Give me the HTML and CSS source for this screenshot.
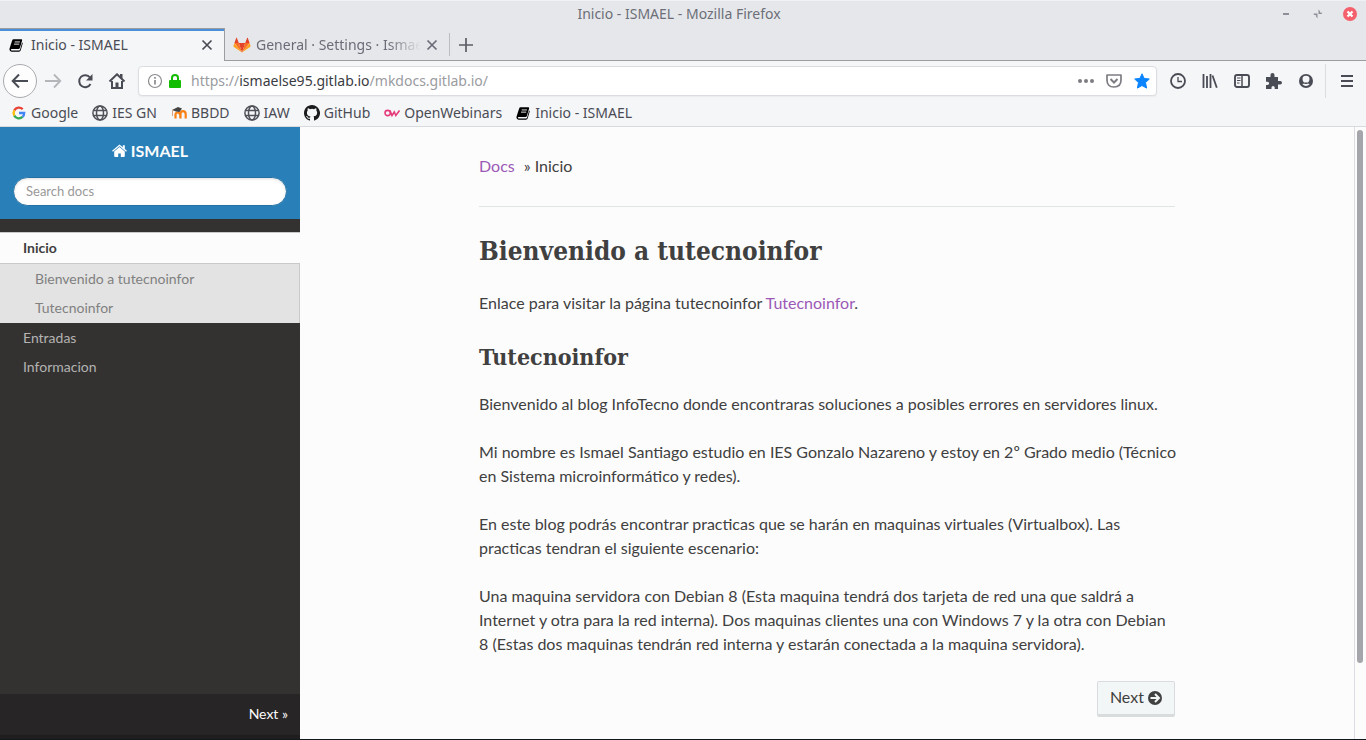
FILE: index.html
```html
<!DOCTYPE html>
<html lang="es">
<head>
<meta charset="utf-8">
<title>Inicio - ISMAEL</title>
<link rel="stylesheet" href="styles.css">
</head>
<body>
<svg class="defs" width="0" height="0" aria-hidden="true">
  <symbol id="book" viewBox="0 0 16 16"><path fill="#000" d="M5.200 1.500h9q1 .2.800 1.300l-2.600 8.700q-.4 1.200-1.600 1.200H3q-.9.100-.9.800.1.600.9.700h8.500q.8 0 1.100-.8L15 5.200q.9.500.6 1.500L13.400 14q-.5 1.600-2 1.600H3Q.6 15.400.5 13q0-.8.300-1.600L3.500 3Q4 1.600 5.200 1.500z"/><path stroke="#fff" stroke-width="1" d="M6.500 4.500h6M5.700 7h6"/></symbol>
  <symbol id="globe" viewBox="0 0 16 16"><g fill="none" stroke="#4f5158" stroke-width="1.500"><circle cx="8" cy="8" r="7.100"/><ellipse cx="8" cy="8" rx="3.500" ry="7"/><path d="M1.500 5.400h13M1.500 10.600h13"/></g></symbol>
  <symbol id="cross" viewBox="0 0 12 12"><path d="M1.500 1.500l9 9M10.500 1.500l-9 9" stroke="currentColor" stroke-width="1.700" fill="none"/></symbol>
</svg>

<header class="browser">
  <div class="titlebar">
    <span class="window-title">Inicio - ISMAEL - Mozilla Firefox</span>
    <div class="window-buttons">
      <button aria-label="Minimizar"><svg width="16" height="16" viewBox="0 0 16 16"><path d="M5 8h6" stroke="#8d8f98" stroke-width="2"/></svg></button>
      <button aria-label="Restaurar"><svg width="16" height="16" viewBox="0 0 16 16"><path fill="#8d8f98" d="M8.500 3.500l1.400 1.400v1.600l2.400.3L11.500 8h-3zM3.800 7.500h3.700v4.700L6.100 10.700V9.300l-2.400-.5z"/></svg></button>
      <button aria-label="Cerrar"><svg width="16" height="16" viewBox="0 0 16 16"><circle cx="8" cy="8" r="7" fill="#f4606c"/><path d="M5.500 5.500l5 5M10.500 5.500l-5 5" stroke="#fff" stroke-width="2.200"/></svg></button>
    </div>
  </div>

  <div class="tabs" role="tablist">
    <div class="tab active" role="tab" aria-selected="true">
      <svg width="14" height="14"><use href="#book"/></svg>
      <span class="tab-label">Inicio - ISMAEL</span>
      <button aria-label="Cerrar pestaña"><svg width="12" height="12"><use href="#cross"/></svg></button>
    </div>
    <div class="tab other" role="tab" aria-selected="false">
      <svg width="18" height="16" viewBox="0 0 18 16"><path fill="#e24329" d="M9 15.500L5.800 6h6.400z"/><path fill="#fc6d26" d="M9 15.500L5.800 6H1.400zM9 15.500L12.200 6h4.400z"/><path fill="#fca326" d="M1.400 6L.5 8.700q-.2.700.4 1.200L9 15.500zM16.600 6l.9 2.700q.2.700-.4 1.200L9 15.500z"/><path fill="#e24329" d="M1.400 6L3.300.8h.5L5.800 6zM16.600 6L14.700.8h-.5L12.200 6z"/></svg>
      <span class="tab-label fade">General · Settings · Ismae</span>
      <button aria-label="Cerrar pestaña"><svg width="12" height="12"><use href="#cross"/></svg></button>
    </div>
    <button class="new-tab" aria-label="Nueva pestaña"><svg width="14" height="14" viewBox="0 0 14 14"><path d="M7 0v14M0 7h14" stroke="#5b5d66" stroke-width="1.700"/></svg></button>
  </div>

  <div class="navbar">
    <button class="back" aria-label="Atrás"><svg width="18" height="16" viewBox="0 0 18 16"><path d="M17 8H2M8 1.500L1.700 8 8 14.500" fill="none" stroke="#4a4c55" stroke-width="2"/></svg></button>
    <button class="nav" aria-label="Adelante"><svg width="18" height="16" viewBox="0 0 18 16"><path d="M1 8h15M10 1.500L16.300 8 10 14.500" fill="none" stroke="#b4b6ba" stroke-width="1.800"/></svg></button>
    <button class="nav" aria-label="Recargar"><svg width="16" height="16" viewBox="0 0 16 16"><path d="M13 4.500A6 6 0 1 0 13.500 11" fill="none" stroke="#4a4c55" stroke-width="2"/><path d="M15.500 1v6.500H9z" fill="#4a4c55"/></svg></button>
    <button class="nav" aria-label="Inicio"><svg width="18" height="16" viewBox="0 0 18 16"><path d="M1.500 8.500L9 1.300l7.500 7.200M4 8v7h10V8" fill="none" stroke="#4a4c55" stroke-width="2"/><path d="M12 1h2.500v5L12 4zM7.500 9.500h3V15h-3z" fill="#4a4c55"/></svg></button>
    <div class="urlbar">
      <svg width="16" height="16" viewBox="0 0 16 16"><circle cx="8" cy="8" r="6.500" fill="none" stroke="#8a8b8f" stroke-width="1.200"/><path d="M8 7v4.500M8 4v1.700" stroke="#8a8b8f" stroke-width="1.700"/></svg>
      <svg width="14" height="16" viewBox="0 0 14 16"><path d="M4 8V5q0-3 3-3t3 3v3" fill="none" stroke="#12bc00" stroke-width="2"/><rect x="1" y="7" width="12" height="8" rx="1" fill="#12bc00"/></svg>
      <span class="url">https://<b>ismaelse95.gitlab.io</b>/mkdocs.gitlab.io/</span>
      <svg width="16" height="16" viewBox="0 0 16 16"><g fill="#7c7d82"><circle cx="2" cy="8" r="2"/><circle cx="8" cy="8" r="2"/><circle cx="14" cy="8" r="2"/></g></svg>
      <svg width="16" height="16" viewBox="0 0 16 16"><path d="M1 2h14v5q0 7-7 7T1 7z" fill="none" stroke="#7c7d82" stroke-width="1.700" stroke-linejoin="round"/><path d="M4.500 6L8 9.500 11.500 6" fill="none" stroke="#7c7d82" stroke-width="2"/></svg>
      <svg width="16" height="16" viewBox="0 0 16 16"><path fill="#0a84ff" stroke="#0a84ff" stroke-linejoin="round" d="M8 .8l2.100 4.600 5.200.6-3.800 3.600 1.100 5.500L8 12.500l-4.600 2.600 1.100-5.500L.7 6l5.200-.6z"/></svg>
    </div>
    <div class="tools">
      <button aria-label="Historial"><svg width="16" height="16" viewBox="0 0 16 16"><circle cx="8" cy="8" r="7" fill="none" stroke="#4a4c55" stroke-width="1.800"/><path d="M8 4v4.500h4" fill="none" stroke="#4a4c55" stroke-width="1.300"/></svg></button>
      <button aria-label="Biblioteca"><svg width="16" height="16" viewBox="0 0 16 16"><path d="M1.500 1v14M5 3v12M8.500 1v14M10.500 2.500l4.300 12.300" stroke="#4a4c55" stroke-width="1.800"/></svg></button>
      <button aria-label="Barra lateral"><svg width="16" height="16" viewBox="0 0 16 16"><rect x="1" y="2" width="14" height="12" rx="2" fill="none" stroke="#4a4c55" stroke-width="1.900"/><path d="M8 2v12" stroke="#4a4c55" stroke-width="1.500"/><path d="M3 5h3.500M3 7.500h3.500M3 10h2.500" stroke="#4a4c55" stroke-width="1.100"/></svg></button>
      <button aria-label="Complementos"><svg width="16" height="16" viewBox="0 0 16 16"><path fill="#4a4c55" d="M4.500 4V2a2 2 0 0 1 4 0v2H12v4h2.300a1.700 1.700 0 0 1 0 3.400H12V16H8.700v-1.500a1.600 1.600 0 0 0-3.200 0V16H0v-4h1.500a1.600 1.600 0 0 0 0-3.300H0V4z"/></svg></button>
      <button aria-label="Cuenta"><svg width="16" height="16" viewBox="0 0 16 16"><circle cx="8" cy="8" r="7" fill="#4a4c55"/><path fill="#f5f6f8" d="M8 2.800q3.500 0 3.500 3.200 0 2.300-1.500 3.400H6Q4.500 8.300 4.500 6 4.500 2.800 8 2.800zM4.300 11.300l1.700-.9q2 1.300 4 0l1.700.9Q10 13 8 13t-3.700-1.700z"/></svg></button>
      <button class="menu" aria-label="Menú"><svg width="12" height="14" viewBox="0 0 12 14"><path d="M0 2h12M0 7h12M0 12h12" stroke="#4a4c55" stroke-width="2"/></svg></button>
    </div>
  </div>

  <nav class="bookmarks" aria-label="Marcadores">
    <a href="#"><svg width="16" height="16" viewBox="0 0 16 16"><g fill="none" stroke-width="2.300"><path stroke="#ea4335" d="M3.300 5.400A5.200 5.200 0 0 1 11.700 4.300"/><path stroke="#fbbc05" d="M3.300 5.400a5.300 5.300 0 0 0 0 5.200"/><path stroke="#34a853" d="M3.300 10.600A5.200 5.200 0 0 0 11.500 11.900"/><path stroke="#4285f4" d="M8 8h5.200q0 2.500-1.700 3.900"/></g></svg>Google</a>
    <a href="#"><svg width="16" height="16"><use href="#globe"/></svg>IES GN</a>
    <a href="#"><svg width="16" height="16" viewBox="0 0 16 16"><path d="M4.500 13.500V10q0-2.500 2-2.500t2.800 2.500v3.500M9.500 13.500V9q0-2.800 2.500-2.800T14.700 9v4.500" fill="none" stroke="#f98012" stroke-width="2.200"/><path fill="#444" d="M1 5l6-3 4 1.500L8.500 7 5 6.500z"/><path stroke="#d7a27c" d="M1.500 5v6"/></svg>BBDD</a>
    <a href="#"><svg width="16" height="16"><use href="#globe"/></svg>IAW</a>
    <a href="#"><svg width="16" height="16" viewBox="0 0 16 16"><path fill="#1b1b1d" d="M8 0C3.580 0 0 3.580 0 8c0 3.540 2.290 6.530 5.470 7.590.4.070.55-.17.55-.38 0-.19-.01-.82-.01-1.490-2.010.37-2.530-.49-2.690-.94-.09-.23-.48-.94-.82-1.130-.28-.15-.68-.52-.01-.53.630-.01 1.080.58 1.230.82.72 1.210 1.870.87 2.330.66.07-.52.28-.87.51-1.070-1.780-.2-3.640-.89-3.640-3.950 0-.87.31-1.590.82-2.150-.08-.2-.36-1.020.08-2.120 0 0 .67-.21 2.200.82a7.400 7.400 0 0 1 4 0c1.530-1.040 2.200-.82 2.200-.82.44 1.100.16 1.920.08 2.120.51.56.82 1.270.82 2.150 0 3.070-1.870 3.750-3.650 3.950.29.25.54.73.54 1.480 0 1.070-.01 1.930-.01 2.200 0 .21.15.46.55.38A8 8 0 0 0 8 0z"/></svg>GitHub</a>
    <a href="#"><svg width="16" height="16" viewBox="0 0 16 16"><path d="M6.300 8A2.600 2.600 0 1 0 1 8a2.600 2.600 0 0 0 5.300 0L6 5.500l2 5L10.300 7l1.500 3.500L15.500 5.500" fill="none" stroke="#e63b7a" stroke-width="1.600"/></svg>OpenWebinars</a>
    <a href="#" class="last"><svg width="14" height="14"><use href="#book"/></svg>Inicio - ISMAEL</a>
  </nav>
</header>

<div class="page">
  <aside class="sidebar">
    <div class="brand">
      <a href="#"><svg width="15" height="14" viewBox="0 0 15 14"><path fill="#fff" d="M7.500 3L2.200 7.400V12q0 1 1 1h3V9.500h2.600V13h3q1 0 1-1V7.400z"/><path fill="none" stroke="#fff" stroke-width="1.300" d="M.5 7.200l7-5.900 7 5.900"/><path fill="#fff" d="M10.800 1.300h2v4l-2-1.600z"/></svg> ISMAEL</a>
      <input type="text" placeholder="Search docs" aria-label="Search docs">
    </div>
    <nav class="toc">
      <a class="current" href="#">Inicio</a>
      <div class="sub">
        <a href="#bienvenido">Bienvenido a tutecnoinfor</a>
        <a href="#tutecnoinfor">Tutecnoinfor</a>
      </div>
      <a href="#">Entradas</a>
      <a href="#">Informacion</a>
    </nav>
    <div class="versions"><a href="#">Next »</a></div>
  </aside>

  <main class="content">
    <div class="article">
      <div class="crumbs"><a href="#">Docs</a><span>» Inicio</span></div>
      <hr>
      <h1 id="bienvenido">Bienvenido a tutecnoinfor</h1>
      <p>Enlace para visitar la página tutecnoinfor <a href="#">Tutecnoinfor</a>.</p>
      <h2 id="tutecnoinfor">Tutecnoinfor</h2>
      <p>Bienvenido al blog InfoTecno donde encontraras soluciones a posibles errores en servidores linux.</p>
      <p>Mi nombre es Ismael Santiago estudio en IES Gonzalo Nazareno y estoy en 2º Grado medio (Técnico en Sistema microinformático y redes).</p>
      <p>En este blog podrás encontrar practicas que se harán en maquinas virtuales (Virtualbox). Las practicas tendran el siguiente escenario:</p>
      <p>Una maquina servidora con Debian 8 (Esta maquina tendrá dos tarjeta de red una que saldrá a Internet y otra para la red interna). Dos maquinas clientes una con Windows 7 y la otra con Debian 8 (Estas dos maquinas tendrán red interna y estarán conectada a la maquina servidora).</p>
      <div class="pager"><a href="#">Next <svg width="14" height="14" viewBox="0 0 14 14"><circle cx="7" cy="7" r="7" fill="#404040"/><path d="M2.500 7h8M7 3l4 4-4 4" fill="none" stroke="#f3f6f6" stroke-width="2"/></svg></a></div>
    </div>
  </main>
  <div class="scroll"><div class="thumb"></div></div>
</div>
</body>
</html>
```
FILE: styles.css
```css
* { box-sizing: border-box; }
body {
  margin: 0;
  height: 100vh;
  display: flex;
  flex-direction: column;
  overflow: hidden;
  border-bottom: 1px solid #10181c;
  background: #fcfcfc;
  color: #404040;
  font: 16px/24px Lato, "Open Sans", sans-serif;
}
a { color: inherit; text-decoration: none; }
button { border: 0; padding: 0; background: none; color: inherit; display: flex; align-items: center; justify-content: center; }
svg { flex: none; }
.defs { position: absolute; }

.browser { background: #f5f6f8; color: #4a4c55; font: 14px/20px "Noto Sans", sans-serif; border-bottom: 1px solid #d8dae0; }
.titlebar {
  display: grid;
  grid-template-columns: 1fr auto 1fr;
  align-items: center;
  height: 28px;
  padding: 0 8px 2px 0;
  background: #e6e7eb;
  border-top: 1px solid #f0f1f4;
  color: #6c6f78;
}
.window-title { grid-column: 2; }
.window-buttons { display: flex; justify-content: flex-end; gap: 16px; }

.tabs { display: flex; height: 33px; background: #e6e7eb; box-shadow: inset 0 -1px #9c9da1; }
.tab { display: flex; align-items: center; }
.tab.active {
  width: 225px;
  padding: 0 11px 0 9px;
  gap: 8px;
  border-top: 1px solid #9c9da1;
  border-right: 1px solid #9c9da1;
  background: #f5f6f8;
  box-shadow: inset 0 2px #4a90d9;
}
.tab.other { width: 225px; margin: 5px 0; padding: 0 11px 0 8px; gap: 5px; border-right: 1px solid #bcbdc2; color: #6a6d77; }
.tab-label { flex: 1; white-space: nowrap; }
.fade { min-width: 0; -webkit-mask-image: linear-gradient(to right, #000 80%, transparent); mask-image: linear-gradient(to right, #000 80%, transparent); }
.new-tab { width: 32px; }

.navbar { display: flex; align-items: center; height: 40px; padding-left: 3px; }
.back { width: 34px; height: 34px; border: 1px solid #a9aaae; border-radius: 50%; background: #fdfdfd; }
.nav { width: 32px; height: 32px; }
.urlbar {
  flex: 1;
  display: flex;
  align-items: center;
  gap: 12px;
  height: 30px;
  margin-left: 5px;
  padding: 0 6px 0 8px;
  border: 1px solid #dcdde2;
  border-radius: 4px;
  background: #fff;
  box-shadow: 0 1px 2px #0000000d;
}
.urlbar svg:nth-child(2) { margin-left: -7px; }
.url { flex: 1; margin-left: -3px; color: #9a9b9f; }
.url b { color: #3a3c44; font-weight: 400; }
.tools { display: flex; align-items: center; height: 34px; padding-left: 5px; }
.tools button { width: 32px; height: 32px; }
.tools .menu { width: 41px; height: 34px; margin-left: 3px; padding-left: 2px; border-left: 1px solid #dcdde2; }

.bookmarks { display: flex; align-items: center; gap: 14px; height: 25px; padding: 0 11px 2px; }
.bookmarks a { display: flex; align-items: center; gap: 4px; }
.bookmarks .last { gap: 5px; }

.page { flex: 1; min-height: 0; display: flex; }
.sidebar { width: 300px; display: flex; flex-direction: column; background: #343230; }
.brand { padding: 12px 13px; height: 92px; background: #2980b9; color: #fcfcfc; text-align: center; font-weight: 700; }
.brand a { display: block; }
.brand svg { vertical-align: -1px; }
.brand input {
  display: block;
  width: 100%;
  height: 29px;
  margin-top: 14px;
  padding: 0 12px 2px;
  border: 1px solid #2472a4;
  border-radius: 50px;
  background: #fff;
  box-shadow: inset 0 1px 3px #ddd;
  font: 13px Lato, sans-serif;
}
.brand input::placeholder { color: #999; }
.toc { flex: 1; padding-top: 13px; font-size: 14px; line-height: 29px; color: #b3b3b3; }
.toc a { display: block; padding: 0 23px; }
.toc .current { border: solid #c9c9c9; border-width: 1px 0; background: #fcfcfc; color: #404040; font-weight: 700; line-height: 30px; }
.sub { padding-bottom: 1px; border-right: 1px solid #c9c9c9; background: #e3e3e3; color: #808080; }
.sub a { padding: 0 35px; }
.versions { height: 45px; padding: 8px 12px; background: #272525; border-bottom: 4px solid #1f1d1d; color: #fcfcfc; text-align: right; font-size: 14px; }

.content { flex: 1; min-width: 0; }
.article { max-width: 800px; margin: 0 auto; padding: 27px 52px; }
.article p { margin: 0 -2px 24px 0; }
.article a { color: #9b59b6; }
.crumbs { display: flex; gap: 9px; }
hr { margin: 28px 0 24px; border: 0; border-top: 1px solid #e1e4e5; }
h1, h2 { font-family: "Roboto Slab", "DejaVu Serif Condensed", "DejaVu Serif", serif; font-weight: 700; }
h1 { margin: 0 0 20px; font-size: 26px; line-height: 40px; }
h2 { margin: 0 0 17px; font-size: 23px; line-height: 36px; }
.pager { display: flex; justify-content: flex-end; padding-top: 1px; }
.article .pager a {
  padding: 3px 12px 5px;
  border: 1px solid #d9dcdc;
  border-bottom-width: 3px;
  border-radius: 2px;
  background: #f3f6f6;
  color: #404040;
}
.pager svg { vertical-align: -2px; }
.scroll { width: 12px; padding: 3px 2px; border-left: 1px solid #dcdce4; }
.thumb { width: 6px; height: 88%; border-radius: 3px; background: #a5a6ab; }
```
